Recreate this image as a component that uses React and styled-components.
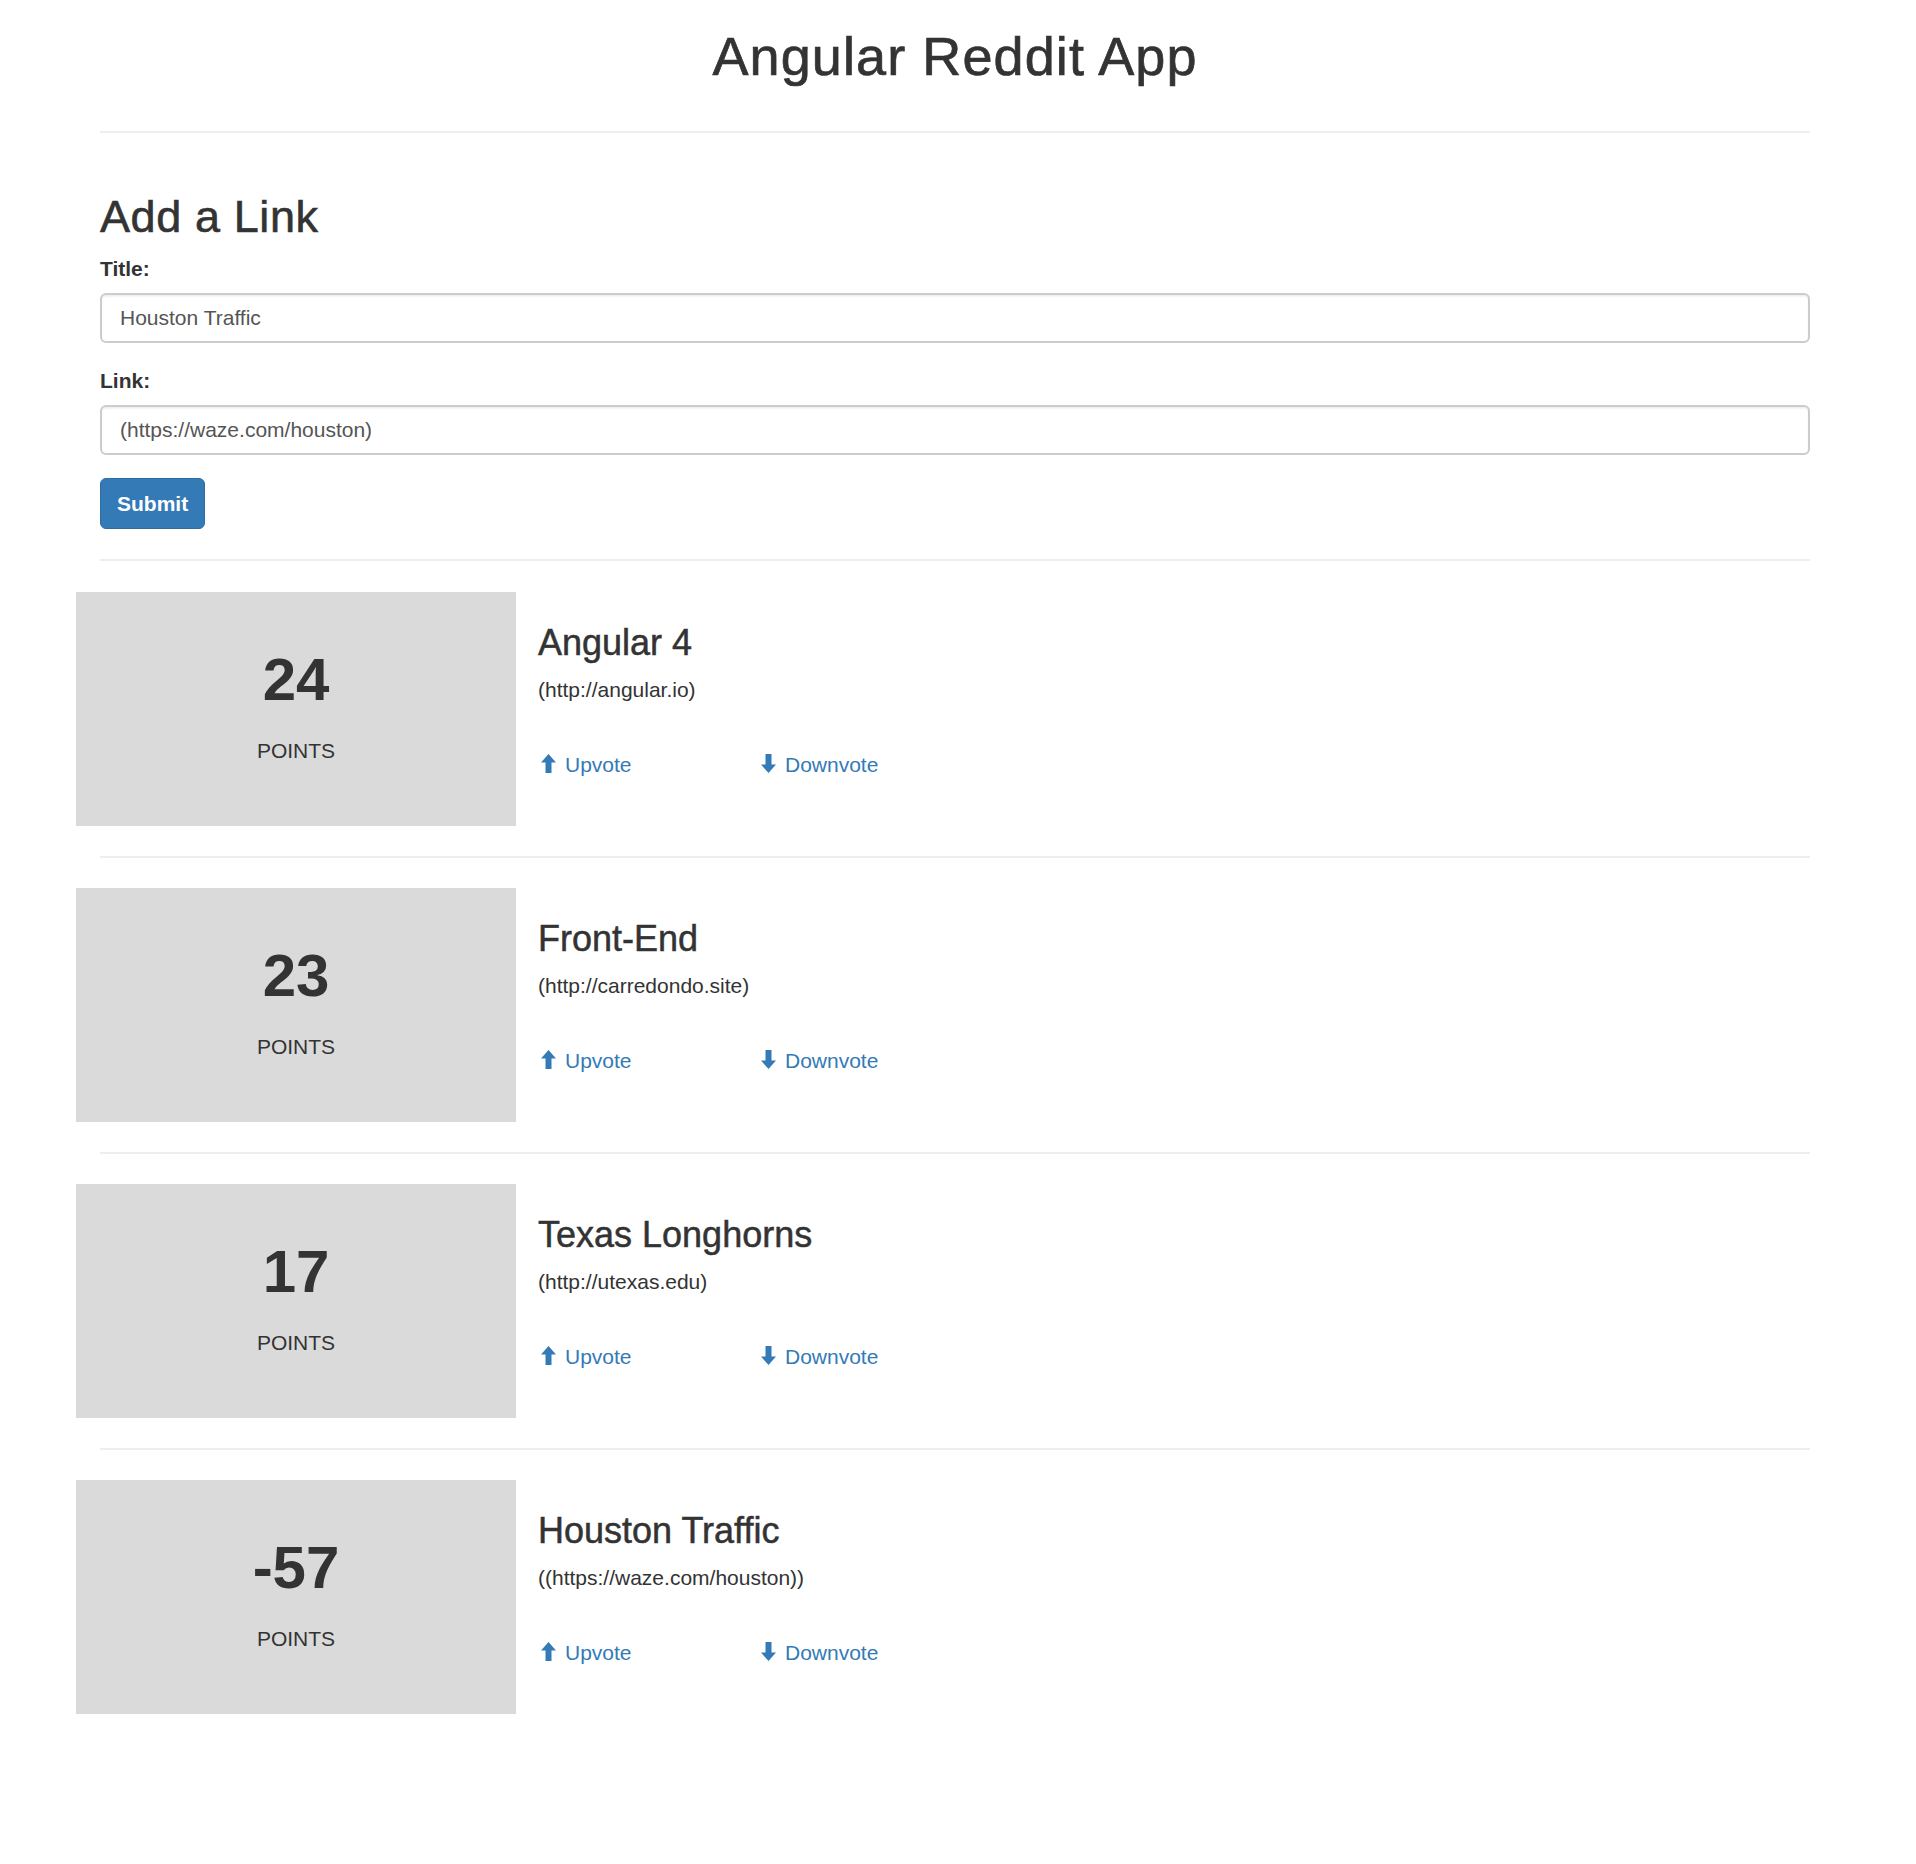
import React from 'react';
import styled, { createGlobalStyle } from 'styled-components';

const GlobalStyle = createGlobalStyle`
  body {
    margin: 0;
    background: #fff;
    color: #333;
    font-family: "Liberation Sans", Arial, sans-serif;
    font-size: 21px;
    line-height: 30px;
  }
  * { box-sizing: border-box; }
`

const Page = styled.div`
  padding-right: 6px;
`
const Container = styled.div`
  max-width: 1710px;
  margin: 0 auto;
  padding-bottom: 150px;
`
const AppTitle = styled.h1`
  margin: 0;
  padding-top: 26px;
  font-size: 54px;
  line-height: 60px;
  font-weight: 500;
  letter-spacing: 1.1px;
  -webkit-text-stroke: 0.7px #333;
  text-align: center;
`
const Divider = styled.hr`
  border: 0;
  height: 2px;
  background: #eee;
  margin: ${props => props.$top || 30}px 0 ${props => props.$bottom || 30}px;
`
const Form = styled.form`
  margin-bottom: 3px;
`
const FormTitle = styled.h2`
  margin: 0 0 12px;
  font-size: 45px;
  line-height: 50px;
  font-weight: 500;
  letter-spacing: 0.6px;
  -webkit-text-stroke: 0.6px #333;
`
const FormGroup = styled.div`
  margin-bottom: 23px;
`
const Label = styled.label`
  display: block;
  font-weight: bold;
  margin-bottom: 9px;
`
const Input = styled.input`
  display: block;
  width: 100%;
  height: 50px;
  padding: 9px 18px;
  font-family: inherit;
  font-size: 21px;
  color: #555;
  background: #fff;
  border: 2px solid #ccc;
  border-radius: 6px;
  box-shadow: inset 0 1.5px 1.5px rgba(0, 0, 0, 0.075);
  outline: none;
`
const SubmitButton = styled.button`
  display: block;
  height: 51px;
  padding: 0 16px;
  font-family: inherit;
  font-size: 21px;
  font-weight: bold;
  color: #fff;
  background: #337ab7;
  border: 1.5px solid #2e6da4;
  border-radius: 6px;
`
const Article = styled.div`
  display: flex;
  margin-left: -24px;
`
const VoteBox = styled.div`
  flex: 0 0 440px;
  height: 234px;
  background: #dadada;
  text-align: center;
  padding-top: 55px;
`
const Score = styled.div`
  font-size: 60px;
  line-height: 66px;
  font-weight: bold;
  margin-bottom: 23px;
`
const ScoreLabel = styled.div`
  font-size: 21px;
  line-height: 30px;
`
const ArticleBody = styled.div`
  flex: 1;
  padding-left: 22px;
  padding-top: 31px;
`
const ArticleTitle = styled.h3`
  margin: 0 0 12px;
  font-size: 36px;
  line-height: 40px;
  font-weight: 500;
  -webkit-text-stroke: 0.5px #333;
`
const ArticleLink = styled.div`
  margin-bottom: 45px;
`
const VoteList = styled.div`
  display: flex;
`
const VoteLink = styled.a`
  flex: 0 0 220px;
  display: flex;
  align-items: center;
  gap: 9px;
  color: #337ab7;
  text-decoration: none;
  cursor: pointer;
  svg { margin: -4px 0 0 3px; }
`

function Arrow({ down }) {
  return (
    <svg width="15" height="19" viewBox="0 0 15 19" fill="#337ab7">
      <path
        d="M7.5 0 L15 8.5 L10.5 8.5 L10.5 19 L4.5 19 L4.5 8.5 L0 8.5 Z"
        transform={down ? 'rotate(180 7.5 9.5)' : undefined}
      />
    </svg>
  );
}

const articles = [
  { title: 'Angular 4', link: '(http://angular.io)', votes: 24 },
  { title: 'Front-End', link: '(http://carredondo.site)', votes: 23 },
  { title: 'Texas Longhorns', link: '(http://utexas.edu)', votes: 17 },
  { title: 'Houston Traffic', link: '((https://waze.com/houston))', votes: -57 },
];

export default function App() {
  return (
    <Page>
      <GlobalStyle />
      <Container>
        <AppTitle>Angular Reddit App</AppTitle>
        <Divider $top={45} $bottom={59} />
        <Form onSubmit={e => e.preventDefault()}>
          <FormTitle>Add a Link</FormTitle>
          <FormGroup>
            <Label htmlFor="title">Title:</Label>
            <Input id="title" name="title" defaultValue="Houston Traffic" />
          </FormGroup>
          <FormGroup>
            <Label htmlFor="link">Link:</Label>
            <Input id="link" name="link" defaultValue="(https://waze.com/houston)" />
          </FormGroup>
          <SubmitButton type="submit">Submit</SubmitButton>
        </Form>
        {articles.map((article, i) => (
          <React.Fragment key={article.title}>
            <Divider $top={30} $bottom={i === 0 ? 31 : 30} />
            <Article>
              <VoteBox>
                <Score>{article.votes}</Score>
                <ScoreLabel>POINTS</ScoreLabel>
              </VoteBox>
              <ArticleBody>
                <ArticleTitle>{article.title}</ArticleTitle>
                <ArticleLink>{article.link}</ArticleLink>
                <VoteList>
                  <VoteLink href="#">
                    <Arrow />
                    Upvote
                  </VoteLink>
                  <VoteLink href="#">
                    <Arrow down />
                    Downvote
                  </VoteLink>
                </VoteList>
              </ArticleBody>
            </Article>
          </React.Fragment>
        ))}
      </Container>
    </Page>
  );
}
